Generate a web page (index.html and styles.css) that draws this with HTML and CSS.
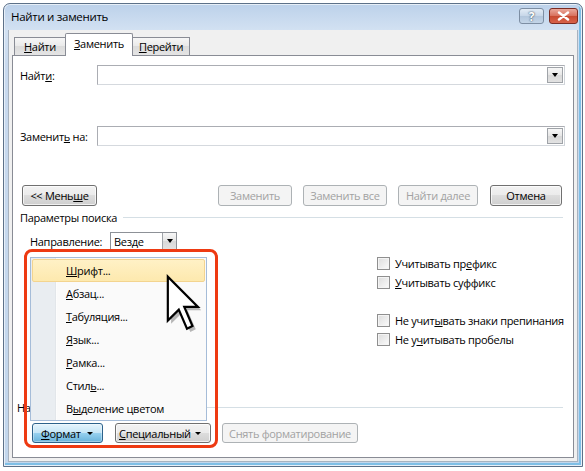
FILE: index.html
```html
<!DOCTYPE html>
<html lang="ru">
<head>
<meta charset="utf-8">
<title>Найти и заменить</title>
<link rel="stylesheet" href="styles.css">
</head>
<body>
<div class="window">
  <div class="titlebar">
    <span class="title">Найти и заменить</span>
    <div class="caption-btns">
      <span class="cbtn help">?</span>
      <span class="cbtn close">
        <svg width="13" height="10" viewBox="0 0 13 10"><path d="M2 1.5 L11 8.5 M11 1.5 L2 8.5" stroke="#fff" stroke-width="2.4" stroke-linecap="round"/></svg>
      </span>
    </div>
  </div>
  <div class="client">
    <div class="tabs">
      <span class="tab t1"><u>Н</u>айти</span>
      <span class="tab active"><u>З</u>аменить</span>
      <span class="tab t3"><u>П</u>ерейти</span>
    </div>
    <div class="panel">
      <div class="field-row">
        <span class="flabel">Найт<u>и</u>:</span>
        <div class="combo"><span class="drop"><i class="tri"></i></span></div>
      </div>
      <div class="field-row row2">
        <span class="flabel">Заменит<u>ь</u> на:</span>
        <div class="combo"><span class="drop"><i class="tri"></i></span></div>
      </div>
      <div class="btn-row">
        <span class="btn less">&lt;&lt; Мень<u>ш</u>е</span>
        <span class="btn dis b-repl">Заменить</span>
        <span class="btn dis b-all">Заменить все</span>
        <span class="btn dis b-next">Найти далее</span>
        <span class="btn b-cancel">Отмена</span>
      </div>
      <div class="group">
        <span>Параметры поиска</span><span class="gline"></span>
      </div>
      <div class="dir-row">
        <span class="dlabel">Направление:</span>
        <div class="select"><span class="sval">Везде</span><span class="drop"><i class="tri"></i></span></div>
      </div>
      <div class="options">
        <span class="chk"><i class="box"></i></span>
        <label class="chk"><i class="box"></i>Учитывать пр<u>е</u>фикс</label>
        <span></span>
        <label class="chk"><i class="box"></i><u>У</u>читывать суффикс</label>
        <span></span>
        <span></span>
        <span></span>
        <label class="chk"><i class="box"></i>Не учит<u>ы</u>вать знаки препинания</label>
        <span></span>
        <label class="chk"><i class="box"></i>Не у<u>ч</u>итывать пробелы</label>
      </div>
      <div class="group bottom-group">
        <span>Найти</span><span class="gline"></span>
      </div>
      <div class="fmt-row">
        <span class="btn menu-btn pressed b-fmt"><span><u>Ф</u>ормат</span><i class="tri"></i></span>
        <span class="btn menu-btn b-spec"><span><u>С</u>пециальный</span><i class="tri"></i></span>
        <span class="btn dis b-clear">Снять форматирование</span>
      </div>
    </div>
  </div>
</div>

<div class="menu">
  <div class="item hot"><u>Ш</u>рифт...</div>
  <div class="item"><u>А</u>бзац...</div>
  <div class="item"><u>Т</u>абуляция...</div>
  <div class="item"><u>Я</u>зык...</div>
  <div class="item"><u>Р</u>амка...</div>
  <div class="item">Стил<u>ь</u>...</div>
  <div class="item">В<u>ы</u>деление цветом</div>
</div>

<div class="callout"></div>

<svg class="cursor" width="44" height="63" viewBox="0 0 16 23">
  <path d="M2.2 2.2 L2.2 18.2 L6.2 14.2 L9.2 21.2 L11.2 20.2 L8.2 13.2 L13.2 13.2 Z" fill="#7d7d7d" opacity="0.55"/>
  <path d="M1 1 L1 17 L5 13 L8 20 L10 19 L7 12 L12 12 Z" fill="#fff" stroke="#000" stroke-width="0.8" stroke-linejoin="miter"/>
</svg>
</body>
</html>
```

FILE: styles.css
```css
* { box-sizing: border-box; }
html, body { margin: 0; padding: 0; }
body {
  width: 585px;
  height: 471px;
  background: #fff;
  font-family: "Open Sans", "Noto Sans", sans-serif;
  font-size: 11px;
  letter-spacing: -0.3px;
  color: #000;
  position: relative;
  overflow: hidden;
}
u { text-decoration: underline; text-underline-offset: 1px; }

.window {
  margin: 3px 0 0 3px;
  width: 580px;
  height: 464px;
  border: 1px solid #5d7189;
  border-radius: 7px 7px 0 0;
  background: linear-gradient(#bcd1ea, #d2e1f2 26px, #c8d9ee 60px, #c2d6ec);
  padding: 0 4px 4px 4px;
  display: flex;
  flex-direction: column;
  box-shadow: inset 0 0 0 1px #e7eff8, inset -2px -2px 0 1px #7fbfe6;
}
.titlebar {
  height: 26px;
  display: flex;
  justify-content: space-between;
  align-items: flex-start;
  padding-left: 3px;
}
.title {
  line-height: 26px;
  font-size: 11.5px;
  color: #000;
}
.caption-btns {
  display: flex;
  gap: 5px;
  padding-top: 4px;
}
.cbtn {
  height: 16px;
  border-radius: 3px;
  display: flex;
  align-items: center;
  justify-content: center;
}
.help {
  width: 25px;
  border: 1px solid #7d8ea3;
  background: linear-gradient(#e3ecf6, #c6d6e8 50%, #b2c6dc 50%, #c4d5e8);
  color: #fff;
  font-weight: bold;
  font-size: 12px;
  text-shadow: 0 0 2px #44566c, 0 0 1px #44566c;
}
.close {
  width: 29px;
  border: 1px solid #7b2c22;
  background: linear-gradient(#eaa89b, #d8705c 50%, #c74a30 50%, #d8624a);
}

.client {
  flex: 1;
  background: #f0f0f0;
  border: 1px solid #a7b2bf;
  border-top: none;
  padding: 3px 2px 3px 3px;
  display: flex;
  flex-direction: column;
  position: relative;
}
.tabs {
  height: 22px;
  display: flex;
  align-items: flex-end;
  padding-left: 2px;
  position: relative;
  z-index: 1;
}
.tab {
  height: 18px;
  border: 1px solid #898c95;
  border-bottom: none;
  background: linear-gradient(#f6f6f6, #e9e9e9 50%, #dcdcdc 50%, #e4e4e4);
  display: flex;
  align-items: center;
  justify-content: center;
  line-height: 1;
}
.t1 { width: 51px; border-right: none; }
.t3 { width: 57px; border-left: none; }
.tab.active {
  width: 68px;
  height: 23px;
  margin-bottom: -1px;
  background: #fff;
  border-radius: 2px 2px 0 0;
  padding-bottom: 3px;
}

.panel {
  width: 562px;
  height: 403px;
  background: #fff;
  border: 1px solid #898c95;
  padding: 9px 8px 14px 7px;
  display: flex;
  flex-direction: column;
}
.field-row {
  display: flex;
  align-items: center;
  height: 20px;
}
.row2 { margin-top: 41px; }
.flabel { width: 77px; }
.combo {
  flex: 1;
  height: 20px;
  border: 1px solid #abadb3;
  border-right-color: #cfd3d8;
  border-bottom-color: #d5d9de;
  background: #fff;
  display: flex;
  justify-content: flex-end;
  align-items: center;
  padding-right: 1px;
}
.drop {
  width: 16px;
  height: 16px;
  border: 1px solid #9fa3a8;
  background: linear-gradient(#f7f7f7, #e6e6e6 50%, #d8d8d8 50%, #e2e2e2);
  display: flex;
  align-items: center;
  justify-content: center;
}
.tri {
  display: block;
  width: 0;
  height: 0;
  border-left: 3.5px solid transparent;
  border-right: 3.5px solid transparent;
  border-top: 4px solid #000;
}

.btn {
  height: 21px;
  border: 1px solid #707070;
  border-radius: 3px;
  background: linear-gradient(#f2f2f2, #ebebeb 50%, #dddddd 50%, #cfcfcf);
  box-shadow: inset 0 0 0 1px rgba(255,255,255,0.7);
  display: flex;
  align-items: center;
  justify-content: center;
  line-height: 1;
}
.btn.dis {
  border-color: #adb2b5;
  background: #f4f4f4;
  color: #a2a2a2;
  box-shadow: none;
}
.btn-row {
  margin-top: 39px;
  display: flex;
  align-items: center;
}
.less { width: 75px; margin-left: 2px; }
.b-repl { width: 74px; margin-left: auto; }
.b-all { width: 84px; margin-left: 11px; }
.b-next { width: 80px; margin-left: 11px; }
.b-cancel { width: 72px; margin-left: 12px; margin-right: 3px; }

.group {
  margin-top: 4px;
  height: 14px;
  display: flex;
  align-items: center;
}
.gline {
  flex: 1;
  margin-left: 6px;
  border-top: 1px solid #d5dfe5;
  margin-right: 2px;
}
.dir-row {
  margin-top: 8px;
  height: 18px;
  display: flex;
  align-items: center;
  padding-left: 10px;
}
.dlabel { width: 80px; }
.select {
  width: 67px;
  height: 18px;
  border: 1px solid #8d9197;
  background: #fff;
  display: flex;
  align-items: center;
  justify-content: space-between;
  padding: 0 0 0 3px;
}
.select .drop { height: 16px; width: 14px; border-top: none; border-bottom: none; border-right: none; }

.options {
  margin-top: 4px;
  padding-left: 10px;
  display: grid;
  grid-template-columns: 347px 1fr;
  grid-auto-rows: 19px;
}
.chk {
  display: flex;
  align-items: center;
  white-space: nowrap;
}
.box {
  width: 13px;
  height: 13px;
  border: 1px solid #8f8f8f;
  background: linear-gradient(135deg, #dcdcdc, #fbfbfb);
  box-shadow: inset 0 0 0 1px #f4f4f4;
  margin-right: 5px;
  flex: none;
}

.bottom-group {
  margin-top: auto;
  margin-left: -3px;
}
.fmt-row {
  margin-top: 9px;
  display: flex;
  align-items: center;
  padding-left: 12px;
}
.fmt-row .btn { height: 20px; }
.menu-btn {
  justify-content: space-between;
  padding: 0 9px 0 6px;
}
.menu-btn .tri { border-left-width: 3px; border-right-width: 3px; border-top-width: 3px; }
.b-fmt { width: 71px; padding-left: 8px; }
.b-spec { width: 96px; margin-left: 12px; padding-left: 3px; }
.b-clear { width: 136px; margin-left: 11px; }
.pressed {
  border-color: #2c628b;
  background: linear-gradient(#e5f4fc, #c4e5f6 50%, #98d1ef 50%, #68b3db);
  box-shadow: inset 0 0 0 1px rgba(255,255,255,0.35);
}

/* overlays */
.menu {
  position: absolute;
  left: 30px;
  top: 257px;
  width: 177px;
  height: 164px;
  border: 1px solid #a5bcd8;
  background: linear-gradient(90deg, #e9edf1 0, #e9edf1 24px, #e2e6ea 24px, #e2e6ea 25px, #fff 25px, #fafafa 26px);
  padding: 1px 1px;
}
.item {
  height: 23px;
  line-height: 21px;
  padding-left: 33px;
  border: 1px solid transparent;
  border-radius: 2px;
}
.item.hot {
  background: linear-gradient(#fff1c6, #fde9ae);
  border-color: #f3d48f;
}
.callout {
  position: absolute;
  left: 24px;
  top: 249px;
  width: 194px;
  height: 199px;
  border: 3px solid #ee3a12;
  border-radius: 8px;
}
.cursor {
  position: absolute;
  left: 165px;
  top: 274px;
}
```
